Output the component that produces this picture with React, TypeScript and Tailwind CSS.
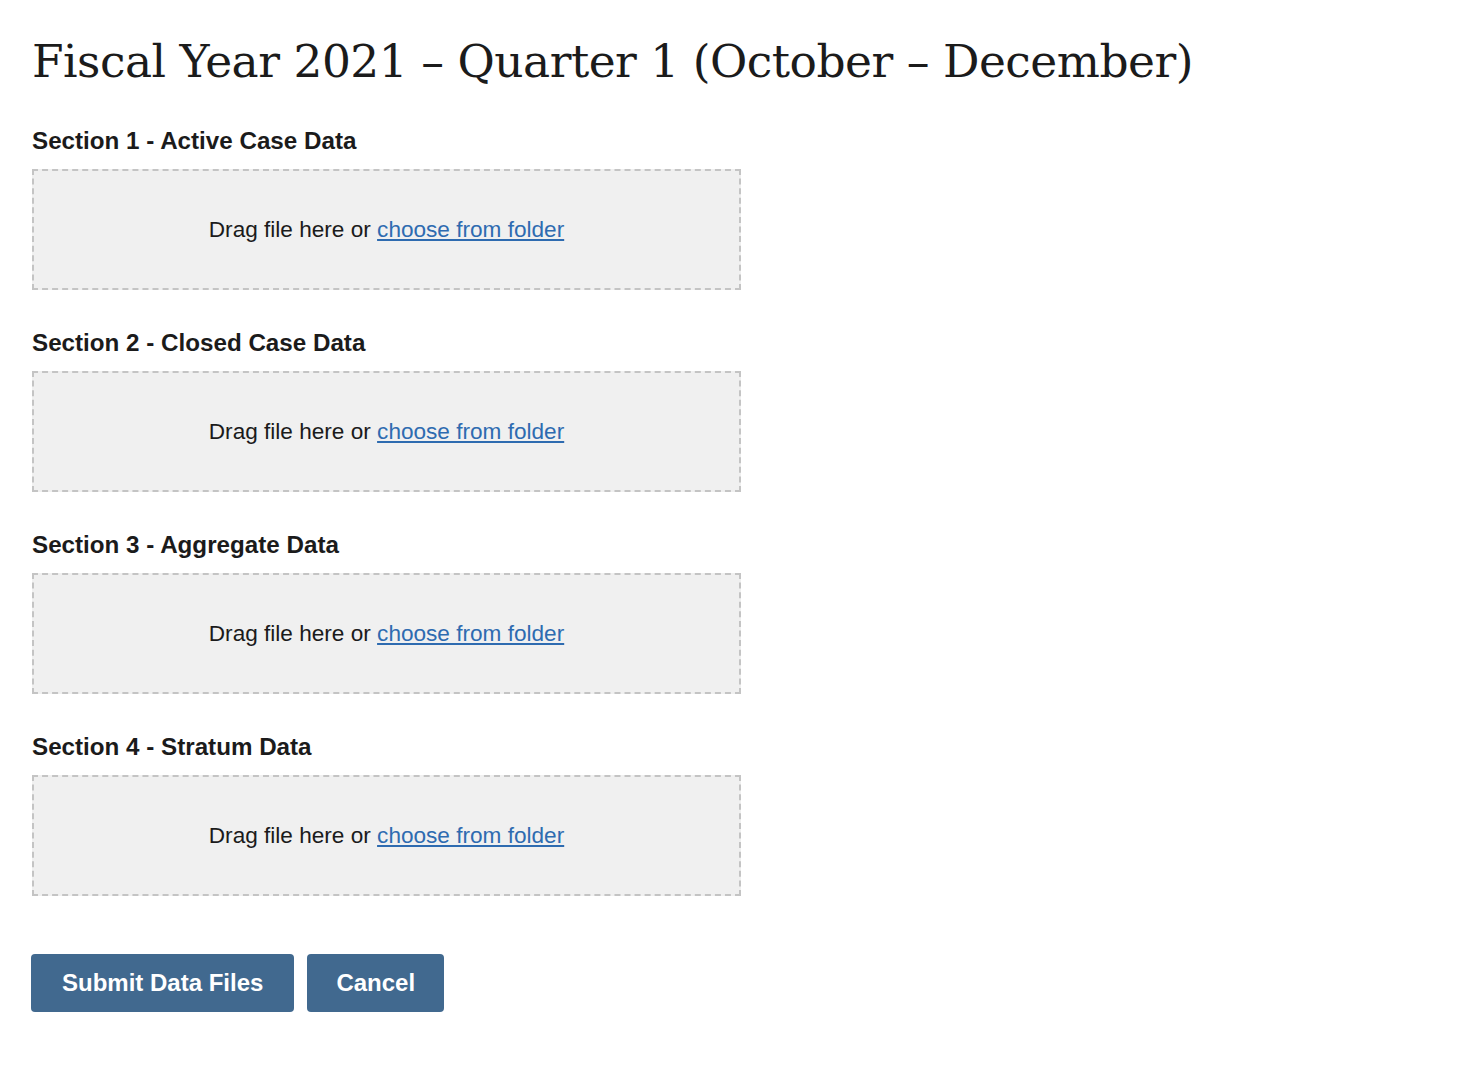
const sections = [
  "Section 1 - Active Case Data",
  "Section 2 - Closed Case Data",
  "Section 3 - Aggregate Data",
  "Section 4 - Stratum Data",
];

const DropZone = () => (
  <div className="flex h-[121px] w-[709px] items-center justify-center border-2 border-dashed border-[#c4c4c4] bg-[#f0f0f0] text-[22.6px] text-[#1b1b1b]">
    <span>
      Drag file here or{" "}
      <a href="#" className="text-[#2e6bb0] underline underline-offset-2">
        choose from folder
      </a>
    </span>
  </div>
);

export default function App() {
  return (
    <div className="min-h-screen bg-white px-[32px] pt-[32px] font-['Liberation_Sans',Arial,sans-serif] text-[#1b1b1b]">
      <h1 className="font-['DejaVu_Serif',Georgia,serif] text-[45.5px] leading-[60px] tracking-[-0.5px] text-[#1b1b1b]">
        Fiscal Year 2021 – Quarter 1 (October – December)
      </h1>

      <div className="mt-[35px] flex flex-col gap-[39px]">
        {sections.map((title) => (
          <div key={title} className="flex flex-col gap-[14px]">
            <h2 className="text-[24.2px] font-bold leading-[28px]">{title}</h2>
            <DropZone />
          </div>
        ))}
      </div>

      <div className="mt-[58px] flex gap-[13px]">
        <button className="-ml-px h-[58px] rounded-[4px] bg-[#41698f] px-[31px] text-[24px] font-bold text-white">
          Submit Data Files
        </button>
        <button className="h-[58px] rounded-[4px] bg-[#41698f] px-[29px] text-[24px] font-bold text-white">
          Cancel
        </button>
      </div>
    </div>
  );
}
